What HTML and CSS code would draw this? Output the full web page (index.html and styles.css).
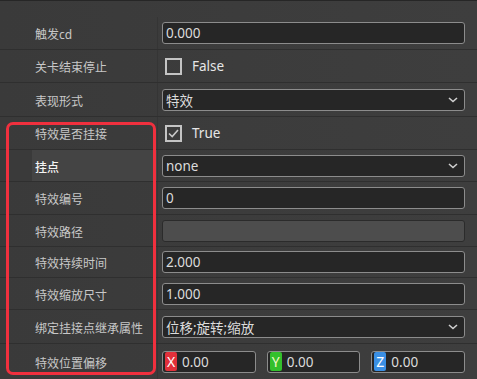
FILE: index.html
```html
<!DOCTYPE html>
<html lang="zh-CN">
<head>
    <meta charset="UTF-8">
    <title>特效属性</title>
    <link rel="stylesheet" href="styles.css">
</head>
<body>

    <!-- Property Grid -->
    <div class="panel">
        <div class="row">
            <div class="label">触发cd</div>
            <div class="value"><div class="field">0.000</div></div>
        </div>
        <div class="row">
            <div class="label">关卡结束停止</div>
            <div class="value">
                <span class="check"></span><span class="check-text">False</span>
            </div>
        </div>
        <div class="row h34">
            <div class="label">表现形式</div>
            <div class="value">
                <div class="field select">特效
                    <svg class="arrow" width="10" height="6" viewBox="0 0 10 6"><path d="M1 1 L5 4.5 L9 1" fill="none" stroke="#d0d0d0" stroke-width="1.6"/></svg>
                </div>
            </div>
        </div>
        <div class="row">
            <div class="label">特效是否挂接</div>
            <div class="value">
                <span class="check">
                    <svg width="13" height="13" viewBox="0 0 13 13"><path d="M2 6.5 L5.2 9.5 L11 3" fill="none" stroke="#c8c8c8" stroke-width="1.6"/></svg>
                </span><span class="check-text">True</span>
            </div>
        </div>
        <div class="row h32">
            <div class="label hover">挂点</div>
            <div class="value">
                <div class="field select">none
                    <svg class="arrow" width="10" height="6" viewBox="0 0 10 6"><path d="M1 1 L5 4.5 L9 1" fill="none" stroke="#d0d0d0" stroke-width="1.6"/></svg>
                </div>
            </div>
        </div>
        <div class="row">
            <div class="label">特效编号</div>
            <div class="value"><div class="field">0</div></div>
        </div>
        <div class="row h32">
            <div class="label">特效路径</div>
            <div class="value"><div class="field disabled"></div></div>
        </div>
        <div class="row h31">
            <div class="label">特效持续时间</div>
            <div class="value"><div class="field">2.000</div></div>
        </div>
        <div class="row h32">
            <div class="label">特效缩放尺寸</div>
            <div class="value"><div class="field">1.000</div></div>
        </div>
        <div class="row h34">
            <div class="label">绑定挂接点继承属性</div>
            <div class="value">
                <div class="field select">位移;旋转;缩放
                    <svg class="arrow" width="10" height="6" viewBox="0 0 10 6"><path d="M1 1 L5 4.5 L9 1" fill="none" stroke="#d0d0d0" stroke-width="1.6"/></svg>
                </div>
            </div>
        </div>
        <div class="row h35">
            <div class="label">特效位置偏移</div>
            <div class="value">
                <div class="vec">
                    <div class="field axis"><span class="badge x">X</span>0.00</div>
                    <div class="field axis"><span class="badge y">Y</span>0.00</div>
                    <div class="field axis"><span class="badge z">Z</span>0.00</div>
                </div>
            </div>
        </div>

        <!-- highlight frame -->
        <div class="mark"></div>
    </div>

</body>
</html>
```

FILE: styles.css
```css
/* General Styling */
body {
    margin: 0;
    background: #3b3b3b;
    font-family: "Noto Sans", "Noto Sans CJK SC", sans-serif;
    color: #c8c8c8;
}

/* Property Grid */
.panel {
    position: relative;
    width: 477px;
    height: 379px;
    border-top: 1px solid #262626;
    padding-top: 16px;
    box-sizing: border-box;
    overflow: hidden;
    background: linear-gradient(90deg, #3a3a3a 0%, #3c3c3c 50%, #3e3e3e 100%);
}

.row {
    display: flex;
    height: 33px;
    box-sizing: border-box;
    border-bottom: 1px solid #2f2f2f;
}

.row.h31 { height: 31px; }
.row.h32 { height: 32px; }
.row.h34 { height: 34px; }
.row.h35 { height: 35px; border-bottom: none; }

.label {
    width: 158px;
    flex: none;
    display: flex;
    align-items: center;
    padding: 2px 0 0 35px;
    box-sizing: border-box;
    font-size: 12px;
    border-right: 1px solid #353535;
}

.label.hover {
    color: #f4f4f4;
    font-weight: 500;
    background: linear-gradient(90deg, #3a3a3a 0, #3a3a3a 32px, #444444 32px);
}

.value {
    flex: 1;
    display: flex;
    align-items: center;
    padding: 0 12px 0 4px;
}

/* Fields */
.field {
    flex: 1;
    height: 22px;
    box-sizing: border-box;
    display: flex;
    align-items: center;
    padding-left: 3px;
    background: #262626;
    border: 1px solid #8c8c8c;
    border-radius: 3px;
    font-size: 13.5px;
    color: #dcdcdc;
}

.field.select {
    justify-content: space-between;
    padding-right: 6px;
}

.field.disabled {
    background: #4d4d4d;
    border-color: #2b2b2b;
}

.arrow {
    flex: none;
}

/* Checkbox */
.check {
    width: 17px;
    height: 17px;
    box-sizing: border-box;
    border: 2px solid #c4c4c4;
    margin-left: 3px;
    display: flex;
    align-items: center;
    justify-content: center;
}

.check-text {
    margin-left: 10px;
    font-size: 13.5px;
    color: #e6e6e6;
}

/* Vector fields */
.vec {
    flex: 1;
    display: grid;
    grid-template-columns: 1fr 1fr 1fr;
    gap: 11px;
}

.field.axis {
    padding-left: 2px;
}

.badge {
    width: 12px;
    height: 19px;
    border-radius: 2px;
    margin-right: 5px;
    display: flex;
    align-items: center;
    justify-content: center;
    font-size: 14px;
    color: #ffffff;
}

.badge.x { background: #e2303a; }
.badge.y { background: #33c02c; color: #f4f8c8; }
.badge.z { background: #3a8fe4; }

/* Red annotation frame */
.mark {
    position: absolute;
    left: 6px;
    top: 121px;
    width: 150px;
    height: 253px;
    box-sizing: border-box;
    border: 3px solid #f0303e;
    border-radius: 7px;
    pointer-events: none;
}
```
